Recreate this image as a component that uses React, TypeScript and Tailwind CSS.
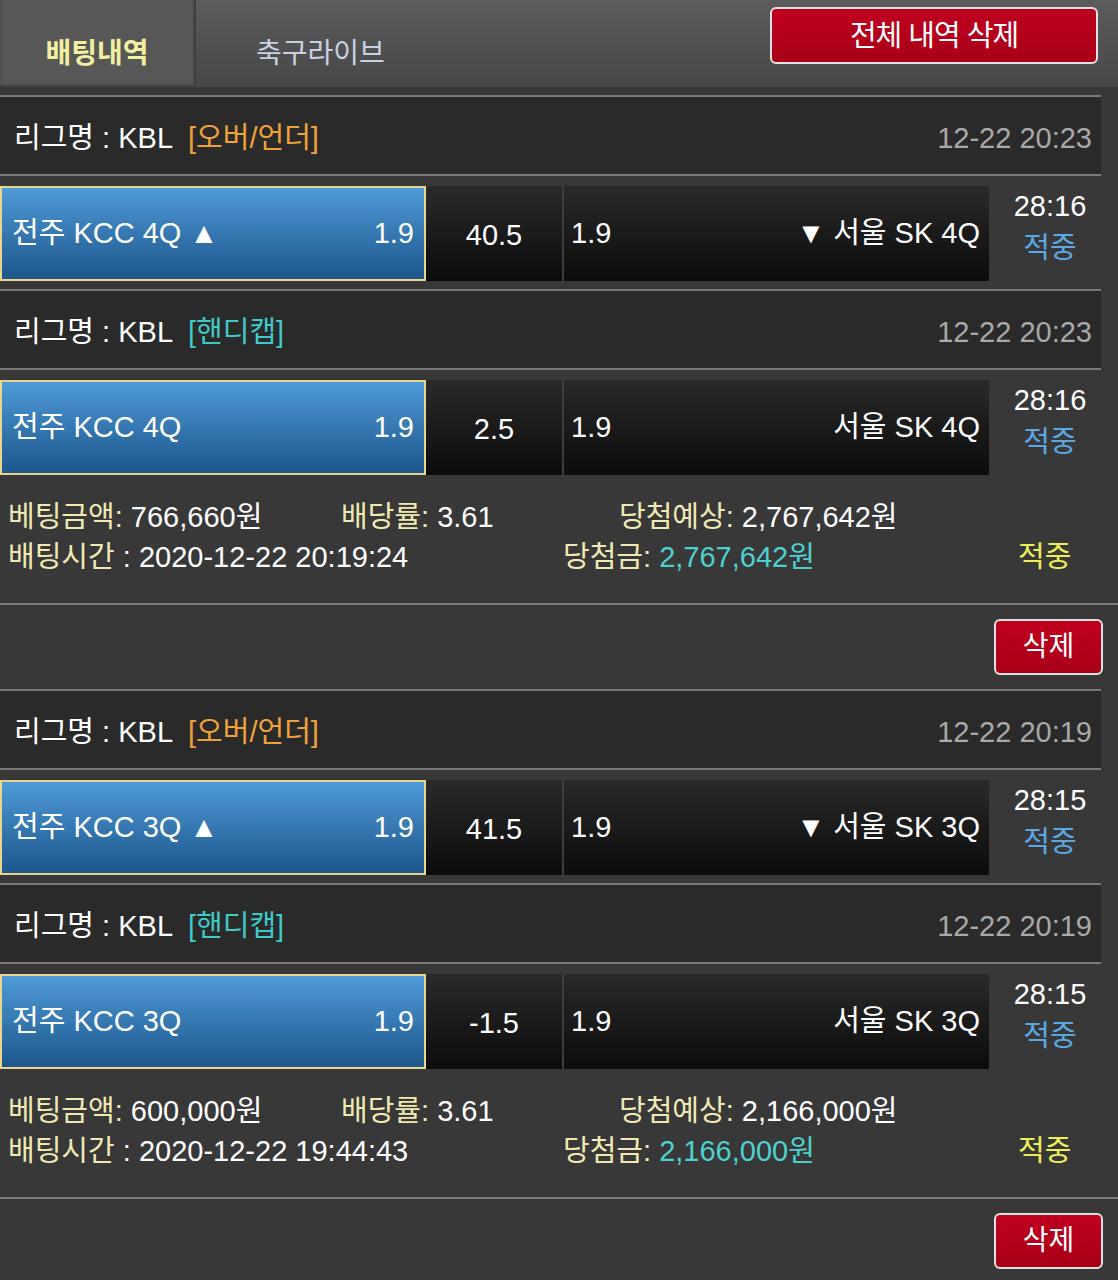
const font = "font-['Liberation_Sans','Noto_Sans_CJK_KR',sans-serif]"

type Bet = {
  type: string
  typeColor: string
  date: string
  home: string
  line: string
  away: string
  time: string
}

type Slip = {
  bets: Bet[]
  amount: string
  rate: string
  expect: string
  placed: string
  win: string
}

const slips: Slip[] = [
  {
    bets: [
      { type: '[오버/언더]', typeColor: 'text-[#f0a23a]', date: '12-22 20:23', home: '전주 KCC 4Q ▲', line: '40.5', away: '▼ 서울 SK 4Q', time: '28:16' },
      { type: '[핸디캡]', typeColor: 'text-[#3fc9c9]', date: '12-22 20:23', home: '전주 KCC 4Q', line: '2.5', away: '서울 SK 4Q', time: '28:16' },
    ],
    amount: '766,660원',
    rate: '3.61',
    expect: '2,767,642원',
    placed: '2020-12-22 20:19:24',
    win: '2,767,642원',
  },
  {
    bets: [
      { type: '[오버/언더]', typeColor: 'text-[#f0a23a]', date: '12-22 20:19', home: '전주 KCC 3Q ▲', line: '41.5', away: '▼ 서울 SK 3Q', time: '28:15' },
      { type: '[핸디캡]', typeColor: 'text-[#3fc9c9]', date: '12-22 20:19', home: '전주 KCC 3Q', line: '-1.5', away: '서울 SK 3Q', time: '28:15' },
    ],
    amount: '600,000원',
    rate: '3.61',
    expect: '2,166,000원',
    placed: '2020-12-22 19:44:43',
    win: '2,166,000원',
  },
]

const Rule = ({ full }: { full?: boolean }) => (
  <div className={`h-[2px] bg-[#7a7a7a] ${full ? 'w-full' : 'w-[1101px]'}`} />
)

const BetRow = ({ bet, last }: { bet: Bet; last: boolean }) => (
  <div>
    <Rule />
    <div className="flex h-[77px] w-[1101px] items-center justify-between bg-[#2a2a2a] pl-[14px] pr-[9px] pt-[6px]">
      <div className="text-white">
        리그명 : KBL <span className={`ml-[8px] ${bet.typeColor}`}>{bet.type}</span>
      </div>
      <div className="text-[#a9a9a9]">{bet.date}</div>
    </div>
    <Rule />
    <div className="h-[10px]" />
    <div className="flex h-[95px]">
      <div className="flex w-[426px] items-center justify-between border-2 border-[#e8d58e] bg-gradient-to-b from-[#4f9ad9] to-[#1d578b] pl-[10px] pr-[10px] text-white">
        <span>{bet.home}</span>
        <span>1.9</span>
      </div>
      <div className="flex w-[136px] items-center justify-center bg-gradient-to-b from-[#2a2a2a] to-[#0c0c0c] pt-[5px] text-white">
        {bet.line}
      </div>
      <div className="flex w-[427px] items-center justify-between border-l-2 border-[#3d3d3d] bg-gradient-to-b from-[#2a2a2a] to-[#0c0c0c] pl-[7px] pr-[9px] text-white">
        <span>1.9</span>
        <span>{bet.away}</span>
      </div>
      <div className="flex w-[122px] flex-col items-center leading-[42px]">
        <span className="-mt-[1px] text-white">{bet.time}</span>
        <span className="text-[#5aa9e2]">적중</span>
      </div>
    </div>
    {!last && <div className="h-[8px]" />}
  </div>
)

const SlipBlock = ({ slip }: { slip: Slip }) => (
  <div>
    {slip.bets.map((b, i) => (
      <BetRow key={i} bet={b} last={i === slip.bets.length - 1} />
    ))}
    <div className="h-[128px] pl-[8px] pt-[22px] leading-[40px]">
      <div className="flex">
        <span className="w-[333px]">
          <span className="text-[#f1e9b4]">베팅금액:</span> <span className="text-white">{slip.amount}</span>
        </span>
        <span className="w-[278px]">
          <span className="text-[#f1e9b4]">배당률:</span> <span className="text-white">{slip.rate}</span>
        </span>
        <span>
          <span className="text-[#f1e9b4]">당첨예상:</span> <span className="text-white">{slip.expect}</span>
        </span>
      </div>
      <div className="flex">
        <span className="w-[555px]">
          <span className="text-[#f1e9b4]">배팅시간</span> <span className="text-white">: {slip.placed}</span>
        </span>
        <span className="w-[455px]">
          <span className="text-[#f1e9b4]">당첨금:</span> <span className="text-[#4fd0d0]">{slip.win}</span>
        </span>
        <span className="text-[#eeee5a]">적중</span>
      </div>
    </div>
    <Rule full />
    <div className="flex h-[84px] items-center justify-end pr-[15px]">
      <button className="h-[56px] w-[109px] rounded-[6px] border-2 border-[#e2e2e2] bg-gradient-to-b from-[#c0001f] to-[#a80018] text-[28px] text-white">
        삭제
      </button>
    </div>
  </div>
)

export default function App() {
  return (
    <div className={`min-h-[1280px] w-[1118px] overflow-hidden bg-[#383838] text-[29px] ${font}`}>
      <div className="flex h-[87px] items-stretch justify-between bg-gradient-to-b from-[#5c5c5c] to-[#474747]">
        <div className="flex">
          <div className="flex w-[196px] items-center justify-center border-r-2 border-[#3e3e3e] bg-[#575757] pt-[20px] text-[28px] font-bold text-[#f2f0a0] shadow-[inset_0_-2px_3px_rgba(0,0,0,0.25)]">
            배팅내역
          </div>
          <div className="flex items-center pl-[60px] pt-[20px] text-[28px] text-[#c9d1e2]">축구라이브</div>
        </div>
        <div className="pr-[20px] pt-[7px]">
          <button className="h-[57px] w-[328px] rounded-[6px] border-2 border-[#e2e2e2] bg-gradient-to-b from-[#bf001e] to-[#a80018] pt-[2px] text-[29px] tracking-[-1px] text-white">
            전체 내역 삭제
          </button>
        </div>
      </div>
      <div className="h-[8px]" />
      {slips.map((s, i) => (
        <SlipBlock key={i} slip={s} />
      ))}
    </div>
  )
}
